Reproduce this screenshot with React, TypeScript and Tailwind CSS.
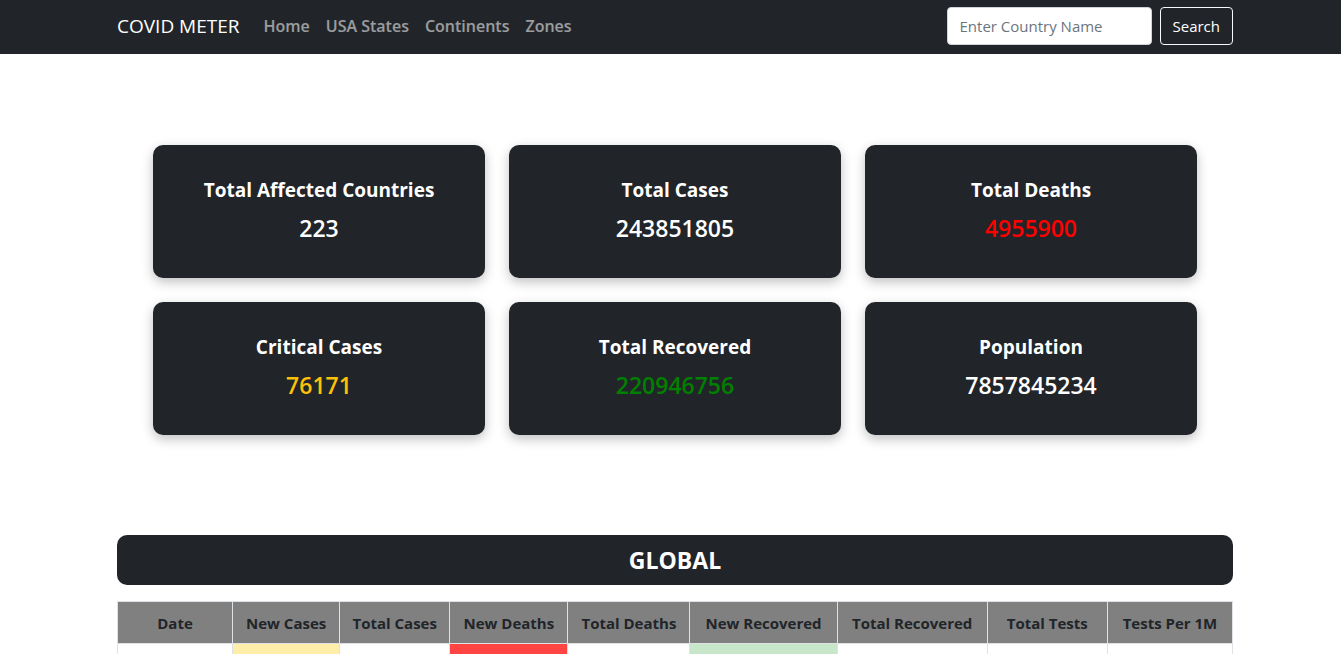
import { useState } from 'react';

const stats = [
  { title: 'Total Affected Countries', value: '223', color: 'text-white' },
  { title: 'Total Cases', value: '243851805', color: 'text-white' },
  { title: 'Total Deaths', value: '4955900', color: 'text-[#ff0000]' },
  { title: 'Critical Cases', value: '76171', color: 'text-[#ffc107]' },
  { title: 'Total Recovered', value: '220946756', color: 'text-[#008000]' },
  { title: 'Population', value: '7857845234', color: 'text-white' },
];

const columns = [
  { label: 'Date', w: 'w-[115px]', cell: 'bg-white' },
  { label: 'New Cases', w: 'w-[107px]', cell: 'bg-[#ffeeaa]' },
  { label: 'Total Cases', w: 'w-[110px]', cell: 'bg-white' },
  { label: 'New Deaths', w: 'w-[118px]', cell: 'bg-[#ff4444]' },
  { label: 'Total Deaths', w: 'w-[122px]', cell: 'bg-white' },
  { label: 'New Recovered', w: 'w-[147px]', cell: 'bg-[#c8e6c9]' },
  { label: 'Total Recovered', w: 'w-[150px]', cell: 'bg-white' },
  { label: 'Total Tests', w: 'w-[120px]', cell: 'bg-white' },
  { label: 'Tests Per 1M', w: 'w-[125px]', cell: 'bg-white' },
];

function Navbar() {
  const [country, setCountry] = useState('');

  return (
    <nav className="h-[54px] bg-[#212529]">
      <div className="ml-[117px] flex h-full w-[1116px] items-center pb-[2px]">
        <a className="mr-6 text-[19px] text-white">COVID METER</a>
        <ul className="flex text-[16px] font-semibold text-white/55">
          <li className="pr-4">Home</li>
          <li className="pr-4">USA States</li>
          <li className="pr-4">Continents</li>
          <li>Zones</li>
        </ul>
        <form className="ml-auto flex gap-2" onSubmit={(e) => e.preventDefault()}>
          <input
            value={country}
            onChange={(e) => setCountry(e.target.value)}
            placeholder="Enter Country Name"
            className="h-[38px] w-[205px] rounded-[4px] border border-[#ced4da] bg-white px-3 text-[15px] text-[#212529] placeholder:text-[#6c757d] outline-none"
          />
          <button className="h-[38px] rounded-[4px] border border-[#f8f9fa] px-[12px] text-[15px] text-white">
            Search
          </button>
        </form>
      </div>
    </nav>
  );
}

export default function App() {
  return (
    <div className="min-h-screen bg-white font-['Open_Sans',sans-serif]">
      <Navbar />

      <div className="ml-[117px] w-[1116px]">
        {/* stat cards */}
        <div className="mx-auto mt-[91px] grid w-[1044px] grid-cols-3 gap-6">
          {stats.map((s) => (
            <div
              key={s.title}
              className="flex h-[133px] flex-col items-center justify-center rounded-[10px] bg-[#212529] pb-[2px] shadow-[0_4px_12px_rgba(0,0,0,0.25)]"
            >
              <h5 className="text-[19px] font-bold text-white">{s.title}</h5>
              <p className={`mt-[7px] text-[23px] font-semibold ${s.color}`}>{s.value}</p>
            </div>
          ))}
        </div>

        <div className="mt-[100px] flex h-[50px] items-center justify-center rounded-[10px] bg-[#212529]">
          <h3 className="text-[23px] font-bold text-white">GLOBAL</h3>
        </div>

        <table className="mt-4 w-full border-collapse border border-[#9e9e9e] text-[15px]">
          <thead>
            <tr className="bg-[#808080]">
              {columns.map((c) => (
                <th
                  key={c.label}
                  className={`${c.w} h-[42px] border border-[#dee2e6] pt-[2px] font-bold text-[#212529]`}
                >
                  {c.label}
                </th>
              ))}
            </tr>
          </thead>
          <tbody>
            <tr>
              {columns.map((c) => (
                <td key={c.label} className={`${c.cell} h-[42px] border border-[#dee2e6]`} />
              ))}
            </tr>
          </tbody>
        </table>
      </div>
    </div>
  );
}
